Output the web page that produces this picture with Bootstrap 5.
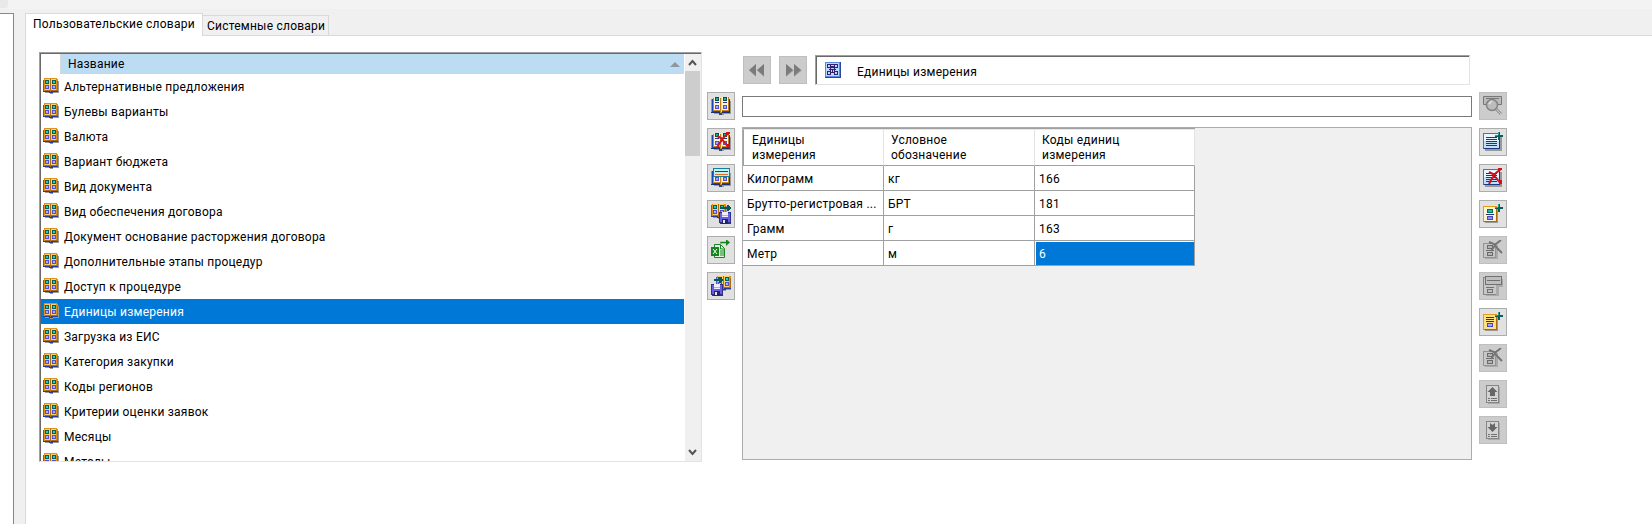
<!DOCTYPE html>
<html lang="ru">
<head>
<meta charset="utf-8">
<title>Словари</title>
<link href="https://cdn.jsdelivr.net/npm/bootstrap@5.3.0/dist/css/bootstrap.min.css" rel="stylesheet">
<style>
body{width:1652px;height:524px;overflow:hidden;background:#f0f0f0;color:#000;font-family:Roboto,"Liberation Sans",sans-serif;font-size:12px;line-height:15px;letter-spacing:.23px}
svg{display:block;flex:none}
.top-strip{height:9px;background:#f3f3f3}
.top-strip div{width:8px;height:8px;background:#e9e9e9;border-radius:0 0 3px 0}
.side-pane{width:14px;margin-top:4px;border:1px solid #828790;border-width:1px 1px 0 0;background:#fff}
.tabs-area{margin-left:11px;margin-top:4px}
.tab-strip{height:23px;white-space:nowrap}
.tab-on{width:178px;height:23px;border:1px solid #d9d9d9;border-bottom:0;background:#fff;padding:3px 0 0 7px}
.tab-off{width:126px;height:21px;margin-top:2px;border:1px solid #d9d9d9;border-left:0;padding:3px 0 0 4px}
.tab-rest{border-bottom:1px solid #d9d9d9}
.page{background:#fff;border-left:1px solid #d9d9d9;padding:16px 0 0 13px}
.sunken{border:1px solid;border-color:#a0a0a0 #e3e3e3 #e3e3e3 #a0a0a0;background:#fff}
.sunken>.inner{border:1px solid;border-color:#696969 transparent transparent #696969;border-right:0;border-bottom:0;height:100%}
.dict-list{width:663px;height:410px}
.list-head{height:20px}
.head-name{margin-left:19px;border-left:1px solid #d8d8d8;background:#bcdcf4;padding:3px 0 0 7px;height:20px;width:624px}
.head-name svg{margin:5px 4px 0 auto}
.dict-row{height:25px;padding:4px 0 0 2px}
.dict-row span{margin:2px 0 0 5px}
.dict-row.sel,.grid td.sel{background:#0078d7;color:#fff}
.scroller{width:16px;margin-left:1px;background:#f0f0f0}
.thumb{width:15px;height:85px;background:#cdcdcd;margin-top:4px}
.tool{width:28px;height:28px;border:1px solid #adadad;background:#e1e1e1;border-radius:0;padding:3px}
.tool.off{background:#ccc;border-color:#bfbfbf}
.toolcol{gap:8px}
.title-field{width:655px;height:30px;margin-left:8px}
.search-box{width:730px;height:21px;border:1px solid #7a7a7a;background:#fff;margin-top:11px}
.grid-box{width:730px;height:333px;border:1px solid #acacb0;background:#f0f0f0;margin-top:10px}
.grid{width:452px;table-layout:fixed;border-collapse:separate;border-spacing:0;border-top:1px solid #a0a0a0;background:#fff}
.grid th{font-weight:400;height:37px;padding:3px 0 0 8px;border-right:1px solid #e3e3e3;border-bottom:1px solid #a0a0a0;border-top:1px solid #e8e8e8;vertical-align:top}
.grid th:first-child{border-left:1px solid #a0a0a0}
.grid th+th{padding-left:7px}
.grid td{height:25px;padding:3px 0 0 4px;border-right:1px solid #a0a0a0;border-bottom:1px solid #a0a0a0;white-space:nowrap;overflow:hidden}
.grid td.sel{box-shadow:inset 1px 1px #fff}
</style>
</head>
<body class="d-flex flex-column">
<svg width="0" height="0" style="position:absolute" shape-rendering="crispEdges">
<symbol id="sbook" viewBox="0 0 16 16"><path fill="#999" d="M14 3h2v12H2v-1h12zM7 15h3v1H7z"/><path fill="#263c9c" d="M0 2h15v12H0zM6 14h4v1H6z"/><path fill="#3f62cc" d="M0 2h1v11H0z"/><path fill="#dd9418" d="M1 1V0h13v1h1v12H1z"/><path fill="#ffcf68" d="M2 1h5v11H2zM8 1h5v11H8z"/><path fill="#b36d0c" d="M7 1h1v13H7zM14 3h1v10h-1zM2 12h5v1H2zM8 12h6v1H8z"/><path fill="#065f5c" d="M2 2h4v4H2zM9 2h4v4H9z"/><path fill="#22d0b8" d="M3 3h2v2H3zM10 3h2v2h-2z"/><path fill="#5550cf" d="M2 7h4v4H2zM9 7h4v4H9z"/><path fill="#b3aaff" d="M3 8h2v2H3zM10 8h2v2h-2z"/></symbol>
<symbol id="book" viewBox="0 0 20 20"><path fill="#999" d="M3 5h17v13H3zM9 18h4v1H9z"/><path fill="#1748b8" d="M0 3h19v14H0zM8 17h3v2H8z"/><path fill="#68a2ef" d="M0 3h1v13H0z"/><path fill="#183078" d="M0 16h19v1H0zM18 4h1v12h-1z"/><path fill="#c98a19" d="M2 2h16v13H2zM9 14h2v3H9z"/><path fill="#fff4cf" d="M3 1h6v13H3zM11 1h6v13h-6z"/><path fill="#be8116" d="M9 2h1v14H9zM17 1h1v13h-1z"/><path fill="#ffd774" d="M10 2h1v14h-1z"/><path fill="#064d4b" d="M4 1h4v4H4zM12 1h4v4h-4z"/><path fill="#19b99e" d="M5 2h2v2H5zM13 2h2v2h-2z"/><path fill="#27337b" d="M4 6h4v1H4zM12 6h4v1h-4z"/><path fill="#5450d3" d="M4 9h4v4H4zM12 9h4v4h-4z"/><path fill="#aaa5ff" d="M5 10h2v2H5zM13 10h2v2h-2z"/></symbol>
<symbol id="cross" viewBox="0 0 20 20"><path shape-rendering="auto" d="M6 4l4 2 4 5 4 5M18 1l-5 4-5 7-2 4" fill="none" stroke="#d2101c" stroke-width="2"/><path fill="#d2101c" d="M16 12h3v4h-3zM15 0h4v2h-4z"/></symbol>
<symbol id="plus" viewBox="0 0 20 20"><path fill="#0a5d5a" d="M15 0h2v3h3v2h-3v3h-2V5h-3V3h3z"/><path fill="#2fa497" d="M15 0h1v3h-1zM12 3h3v1h-3z"/></symbol>
<symbol id="disk" viewBox="0 0 12 12"><path fill="#312e8f" d="M0 0h11l1 1v11H1l-1-1z"/><path fill="#655ee0" d="M1 1h10v9H1z"/><path fill="#f1efff" d="M3 0h6v5H3z"/><path fill="#b3b0d8" d="M3 3h6v1H3z"/><path fill="#25236d" d="M3 7h6v5H3z"/><path fill="#e6e5f4" d="M4 8h2v3H4z"/></symbol>
<symbol id="page" viewBox="0 0 20 20"><path fill="#999" d="M2 4h17v15H2z"/><path fill="#3b73cf" d="M0 1h17v16H0z"/><path fill="#163885" d="M16 2h1v15H1v-1h15z"/><path fill="#eaf6ff" d="M1 2h15v7H1z"/><path fill="#c3def8" d="M1 9h15v7H1z"/><path fill="#202f91" d="M3 5h11v1H3zM3 7h11v1H3zM3 9h11v1H3zM3 11h11v1H3zM3 13h11v1H3z"/></symbol>
<symbol id="card-y" viewBox="0 0 20 20"><path fill="#999" d="M2 4h13v15H2z"/><path fill="#e49b17" d="M0 2h14v16H0z"/><path fill="#a96b0d" d="M13 3h1v15H1v-1h12z"/><path fill="#fff5cd" d="M1 3h12v14H1z"/></symbol>
<symbol id="card-cut" viewBox="0 0 20 20"><path fill="#aaa" d="M2 5h13v14H2z"/><path fill="#949494" d="M0 3h13v15H0z"/><path fill="#c7c7c7" d="M1 4h11v13H1z"/><path fill="#6b6b6b" d="M4 5h6v4H4zM3 10h8v1H3zM4 12h6v4H4z"/><path fill="#b4b4b4" d="M5 6h4v2H5zM5 13h4v2H5z"/><path shape-rendering="auto" d="M6 2l5 2 4 5 4 4M18 0l-5 4-5 7" fill="none" stroke="#747474" stroke-width="1.9"/></symbol>
<symbol id="sheet" viewBox="0 0 20 20"><path fill="#aaa" d="M5 3h12v17H5z"/><path fill="#858585" d="M3 1h13v18H3z"/><path fill="#d3d3d3" d="M4 2h11v16H4z"/><path fill="#707070" d="M5 14h2v1H5zM8 14h6v1H8zM5 16h2v1H5zM8 16h6v1H8z"/></symbol>
</svg>
<div class="top-strip"><div></div></div>
<div class="d-flex flex-fill">
 <div class="side-pane"></div>
 <div class="tabs-area d-flex flex-column flex-fill">
  <div class="tab-strip d-flex">
   <div class="tab-on">Пользовательские словари</div><div class="tab-off">Системные словари</div><div class="tab-rest flex-fill"></div>
  </div>
  <div class="page d-flex flex-fill align-items-start">
   <div class="dict-list sunken"><div class="inner d-flex">
     <div class="flex-fill overflow-hidden">
      <div class="list-head d-flex"><div class="head-name d-flex">Название<svg width="10" height="5"><path d="M0 5l5-5 5 5z" fill="#8f969c"/></svg></div></div>
      <div id="rows"></div>
     </div>
     <div class="scroller d-flex flex-column"><svg width="15" height="13"><path d="M4 11l3.5-4 3.5 4" fill="none" stroke="#555" stroke-width="2"/></svg><div class="thumb"></div><svg class="mt-auto mb-1" width="15" height="9"><path d="M4 2l3.5 4L11 2" fill="none" stroke="#555" stroke-width="2"/></svg></div>
   </div></div>
   <div class="toolcol d-flex flex-column" style="margin:40px 0 0 5px">
    <div class="tool"><svg width="20" height="20"><use href="#book"/></svg></div>
    <div class="tool"><svg width="20" height="20"><use href="#book"/><use href="#cross"/></svg></div>
    <div class="tool"><svg width="20" height="20" shape-rendering="crispEdges"><use href="#book"/><path fill="#197e94" d="M2 0h17v9H2z"/><path fill="#bdf2f5" d="M3 1h15v7H3z"/><path fill="#263b92" d="M4 3h13v1H4z"/><path fill="#e36e23" d="M4 6h13v1H4z"/></svg></div>
    <div class="tool"><svg width="20" height="20" shape-rendering="crispEdges"><use href="#sbook" x="0" y="-1" width="16" height="16"/><path fill="#07575b" d="M10 3h6V1h2v1h1v1h1v2h-1v1h-1v1h-2V5h-6z"/><use href="#disk" x="8" y="8" width="12" height="12"/></svg></div>
    <div class="tool"><svg width="20" height="20"><path d="M3.500 4.500h6l4 4v9h-10z" fill="#e8f3e6" stroke="#17851e"/><path d="M9.500 5v4h4" fill="none" stroke="#17851e"/><path d="M9 11h4M9 13h4M9 15h4" stroke="#17851e"/><path d="M0 7h8v9H0z" fill="#17851e"/><path d="M2 9l4 5m0-5l-4 5" stroke="#fff"/><path d="M10 3.500V2.500h7" fill="none" stroke="#17851e" stroke-width="1.500"/><path d="M15 -1l4 3.500-4 3.500z" fill="#17851e"/></svg></div>
    <div class="tool"><svg width="20" height="20" shape-rendering="crispEdges"><use href="#sbook" x="5" y="-1" width="16" height="16"/><path fill="#07575b" d="M3 3h5V1h2v1h1v1h1v2h-1v1h-1v1H8V5H3z"/><use href="#disk" x="0" y="8" width="12" height="12"/></svg></div>
   </div>
   <div style="margin:3px 0 0 7px">
    <div class="d-flex">
     <div class="tool off" style="margin:1px 8px 0 1px"><svg width="20" height="20"><path d="M9 4v13l-7-6.500zM17 4v13l-7-6.500z" fill="#aaa"/><path d="M9 4v12l-7-6zM17 4v12l-7-6z" fill="#7b7b7b"/></svg></div>
     <div class="tool off" style="margin-top:1px"><svg width="20" height="20"><path d="M3 4v13l8-6.500zM11 4v13l8-6.500z" fill="#aaa"/><path d="M3 4v12l7-6zM11 4v12l7-6z" fill="#7b7b7b"/></svg></div>
     <div class="title-field sunken"><div class="inner d-flex">
      <svg width="16" height="16" shape-rendering="crispEdges" style="margin:5px 16px 0 8px"><path fill="#2946a2" d="M0 0h16v16H0z"/><path fill="#5787df" d="M0 0h15v15H0z"/><path fill="#b9d8ff" d="M1 1h13v13H1z"/><path fill="#33206f" d="M2 2h11v1H2zM2 2h1v4H2zM12 2h1v4h-1zM2 5h4v1H2zM9 5h4v1H9zM5 3h1v2H5zM9 3h1v2H9zM6 4h3v2H6zM4 7h7v1H4zM5 6h1v4H5zM9 6h1v4H9zM7 8h1v3H7zM2 9h4v1H2zM9 9h4v1H9zM2 9h1v4H2zM12 9h1v4h-1zM2 12h4v1H2zM9 12h4v1H9zM5 9h1v3H5zM9 9h1v4H9zM6 10h3v1H6z"/></svg>
      <span style="margin-top:8px">Единицы измерения</span></div></div>
    </div>
    <div class="search-box"></div>
    <div class="grid-box">
     <table class="grid"><colgroup><col style="width:141px"><col style="width:151px"><col style="width:160px"></colgroup>
      <tr><th>Единицы<br>измерения</th><th>Условное<br>обозначение</th><th>Коды единиц<br>измерения</th></tr>
      <tr><td>Килограмм</td><td>кг</td><td>166</td></tr>
      <tr><td>Брутто-регистровая ...</td><td>БРТ</td><td>181</td></tr>
      <tr><td>Грамм</td><td>г</td><td>163</td></tr>
      <tr><td>Метр</td><td>м</td><td class="sel">6</td></tr>
     </table>
    </div>
   </div>
   <div class="toolcol d-flex flex-column" style="margin:40px 0 0 7px">
    <div class="tool off"><svg width="20" height="20"><path d="M.5 .5h18v8H.5z" fill="#bbb" stroke="#777"/><path d="M3 2.500h13" stroke="#777"/><path d="M12 12l6 6" stroke="#999" stroke-width="3"/><path d="M12 12l6 6" stroke="#c9c9c9"/><circle cx="9" cy="9" r="5.500" fill="#bcbcbc" stroke="#838383" stroke-width="1.500"/><path d="M6 8l3-3" stroke="#e1e1e1" stroke-width="1.500"/></svg></div>
    <div class="tool"><svg width="20" height="20"><use href="#page"/><use href="#plus"/></svg></div>
    <div class="tool"><svg width="20" height="20"><use href="#page"/><use href="#cross"/></svg></div>
    <div class="tool"><svg width="20" height="20" shape-rendering="crispEdges"><use href="#card-y"/><path fill="#056b62" d="M4 5h6v4H4z"/><path fill="#17bea5" d="M5 6h4v2H5z"/><path fill="#24327c" d="M3 10h8v1H3z"/><path fill="#4944c8" d="M4 12h6v4H4z"/><path fill="#928bff" d="M5 13h4v2H5z"/><use href="#plus"/></svg></div>
    <div class="tool off"><svg width="20" height="20"><use href="#card-cut"/></svg></div>
    <div class="tool off"><svg width="20" height="20" shape-rendering="crispEdges"><path fill="#aaa" d="M3 4h13v16H3zM5 3h15v8H5z"/><path fill="#858585" d="M0 1h13v18H0z"/><path fill="#c7c7c7" d="M1 2h12v16H1z"/><path fill="#707070" d="M2 0h17v9H2zM3 11h8v1H3zM4 13h6v4H4z"/><path fill="#bebebe" d="M3 1h15v7H3zM5 14h4v2H5z"/><path fill="#707070" d="M4 4h13v1H4z"/></svg></div>
    <div class="tool"><svg width="20" height="20" shape-rendering="crispEdges"><use href="#card-y"/><path fill="#ffe080" d="M1 3h12v14H1z"/><path fill="#222f89" d="M3 5h8v1H3zM3 7h8v1H3zM3 9h8v1H3z"/><path fill="#4944c8" d="M4 11h6v4H4z"/><path fill="#aaa4ff" d="M5 12h4v2H5z"/><use href="#plus"/></svg></div>
    <div class="tool off"><svg width="20" height="20"><use href="#card-cut"/></svg></div>
    <div class="tool off"><svg width="20" height="20"><use href="#sheet"/><path fill="#666" d="M9.500 3l5 5H12v4H7V8H4.500z"/></svg></div>
    <div class="tool off"><svg width="20" height="20"><use href="#sheet"/><path fill="#666" d="M9.500 12l-5-5H7V3l2.500 2L12 3v4h2.500z"/></svg></div>
   </div>
  </div>
 </div>
</div>
<script>
const names=["Альтернативные предложения","Булевы варианты","Валюта","Вариант бюджета","Вид документа","Вид обеспечения договора","Документ основание расторжения договора","Дополнительные этапы процедур","Доступ к процедуре","Единицы измерения","Загрузка из ЕИС","Категория закупки","Коды регионов","Критерии оценки заявок","Месяцы","Методы"];
document.getElementById('rows').innerHTML=names.map((n,i)=>`<div class="dict-row d-flex${i==9?' sel':''}"><svg width="16" height="16"><use href="#sbook"/></svg><span>${n}</span></div>`).join('');
</script>
<script src="https://cdn.jsdelivr.net/npm/bootstrap@5.3.0/dist/js/bootstrap.bundle.min.js"></script>
</body>
</html>
